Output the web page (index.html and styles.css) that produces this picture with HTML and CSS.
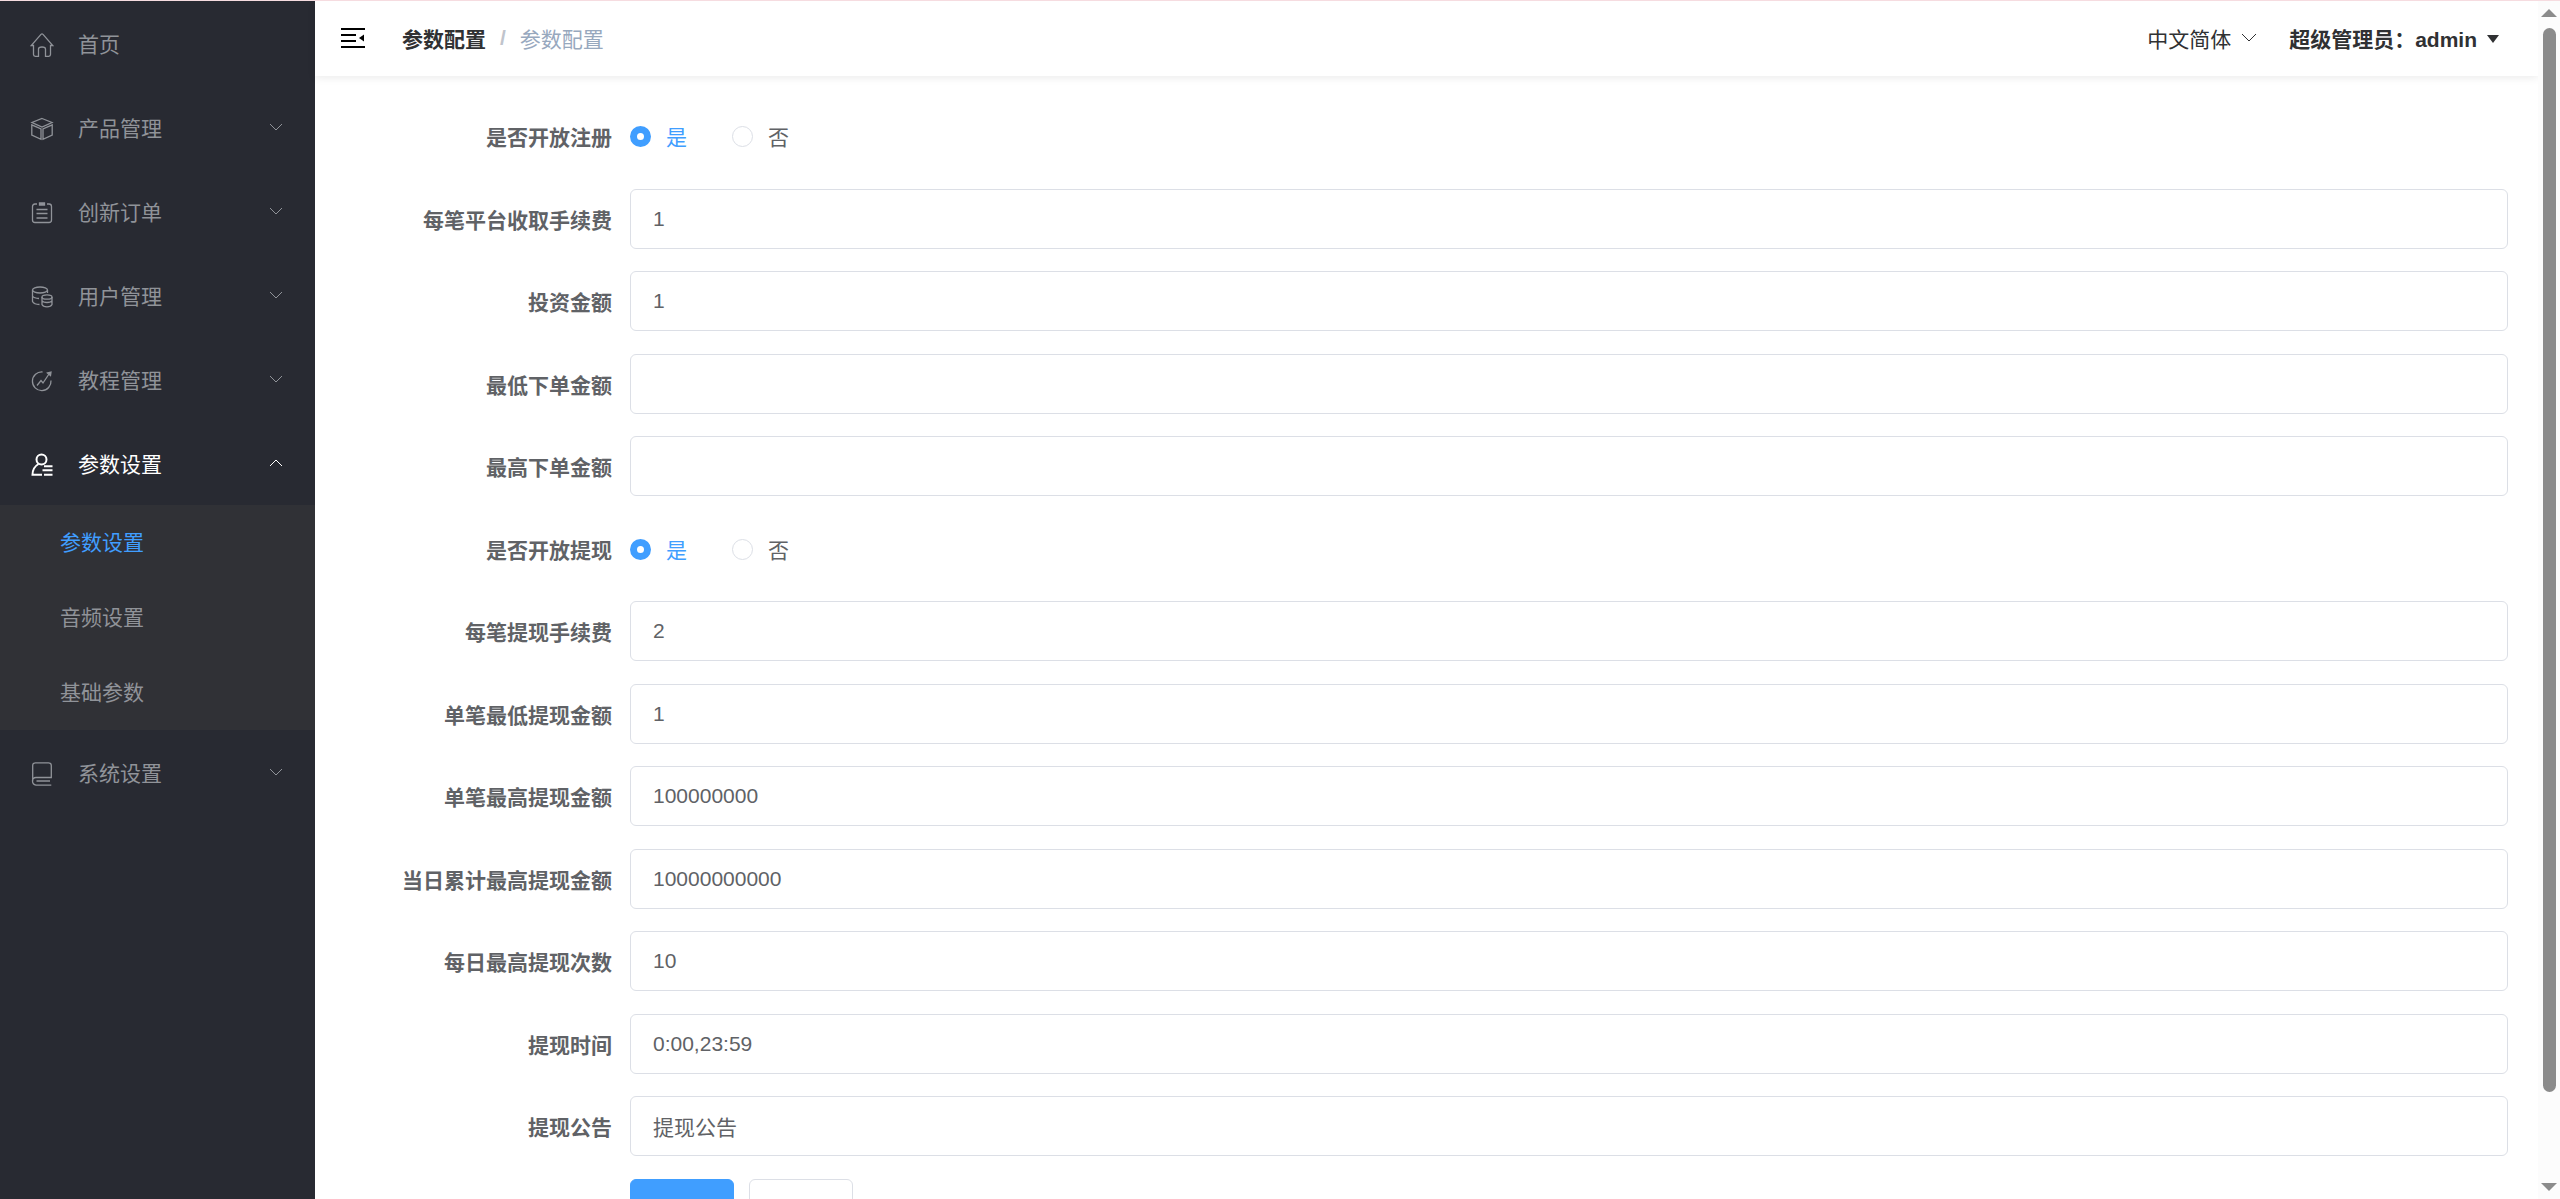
FILE: index.html
```html
<!DOCTYPE html>
<html lang="zh-CN">
  <head>
    <meta charset="UTF-8">
    <title>参数配置</title>
    <link rel="stylesheet" href="styles.css">
  </head>
  <body>
    <!-- Sidebar -->
    <nav class="sidebar">
      <a class="menu-item" href="#">
        <svg class="menu-icon" viewBox="0 0 24 24"><path d="M3.500 12.500H1.200L11 1.400Q12 .4 13 1.400L22.800 12.500H20.500V21.500Q20.500 23.300 18.700 23.300H15.500V16Q15.500 14 12 14Q8.500 14 8.500 16V23.300H5.300Q3.500 23.300 3.500 21.500Z"/></svg>
        <span>首页</span>
      </a>
      <a class="menu-item" href="#">
        <svg class="menu-icon" viewBox="0 0 24 24"><path d="M12 1.500 22 5.500 12 10 2 5.500ZM1.800 7.800 11 12V22.300L1.800 18ZM22.200 7.800 13 12V22.300L22.200 18Z"/></svg>
        <span>产品管理</span>
        <svg class="arrow" viewBox="0 0 14 14"><path d="M1 4l6 6 6-6"/></svg>
      </a>
      <a class="menu-item" href="#">
        <svg class="menu-icon" viewBox="0 0 24 24"><path d="M7 3H5Q2.500 3 2.500 5.500V19Q2.500 21.500 5 21.500H19Q21.500 21.500 21.500 19V5.500Q21.500 3 19 3H17M6.500 8.500H17.500M6.500 12.500H17.500M6.500 17H17.500"/><path class="solid" d="M9.500 2H14.500V4H9.500Z"/></svg>
        <span>创新订单</span>
        <svg class="arrow" viewBox="0 0 14 14"><path d="M1 4l6 6 6-6"/></svg>
      </a>
      <a class="menu-item" href="#">
        <svg class="menu-icon" viewBox="0 0 24 24"><ellipse cx="10" cy="5" rx="7.500" ry="3"/><path d="M2.500 5V16.500Q4 19.300 9.500 19.500M17.500 5V8M2.500 11Q4 13.300 9 13.500"/><ellipse cx="17" cy="12" rx="5" ry="2.200"/><path d="M12 12V19.500Q13 21.800 17 21.800T22 19.500V12M12 15.700Q13 17.500 17 17.500T22 15.700"/></svg>
        <span>用户管理</span>
        <svg class="arrow" viewBox="0 0 14 14"><path d="M1 4l6 6 6-6"/></svg>
      </a>
      <a class="menu-item" href="#">
        <svg class="menu-icon" viewBox="0 0 24 24"><path d="M12.500 3A9.300 9.300 0 1 0 21 11.500M7 16.500 11 11.500 13 14 19 5"/><path class="solid" d="M17.500 4 21 3.200 20.500 6.500Z"/></svg>
        <span>教程管理</span>
        <svg class="arrow" viewBox="0 0 14 14"><path d="M1 4l6 6 6-6"/></svg>
      </a>
      <a class="menu-item open" href="#">
        <svg class="menu-icon" viewBox="0 0 24 24"><circle cx="11.500" cy="6.500" r="5"/><path d="M8.500 11Q2.500 14.500 2.500 21.800H12M14 13.200H22.500M12.500 17.300H22.500M14 21.800H22.500"/></svg>
        <span>参数设置</span>
        <svg class="arrow" viewBox="0 0 14 14"><path d="M1 10l6-6 6 6"/></svg>
      </a>
      <div class="submenu">
        <a class="active" href="#">参数设置</a>
        <a href="#">音频设置</a>
        <a href="#">基础参数</a>
      </div>
      <a class="menu-item" href="#">
        <svg class="menu-icon" viewBox="0 0 24 24"><path d="M2.700 19V3.500Q2.700.8 5.400.8H18.600Q21.300.8 21.300 3.500V15.500H6Q2.500 15.500 2.500 19T6 23.200H21.300M6.500 19H20"/></svg>
        <span>系统设置</span>
        <svg class="arrow" viewBox="0 0 14 14"><path d="M1 4l6 6 6-6"/></svg>
      </a>
    </nav>

    <div class="main">
      <!-- Top bar -->
      <header class="header">
        <button class="fold" type="button" aria-label="折叠菜单">
          <svg viewBox="0 0 24 22"><path d="M0 2H24M0 8H15M0 14H15M0 20H24"/><path class="solid" d="M18 11 23 7.500V14.500Z"/></svg>
        </button>
        <div class="breadcrumb">
          <a href="#">参数配置</a>
          <span class="separator">/</span>
          <span>参数配置</span>
        </div>
        <button class="lang" type="button">
          中文简体
          <svg viewBox="0 0 16 16"><path d="M1 4l7 7 7-7"/></svg>
        </button>
        <button class="user" type="button">
          超级管理员：admin
          <svg viewBox="0 0 12 12"><path d="M0 3H12L6 11Z"/></svg>
        </button>
      </header>

      <!-- Settings form -->
      <form class="form">
        <div class="form-item">
          <span class="label" id="register">是否开放注册</span>
          <div class="radios" role="radiogroup" aria-labelledby="register">
            <label><input type="radio" name="register" checked><span>是</span></label>
            <label><input type="radio" name="register"><span>否</span></label>
          </div>
        </div>
        <div class="form-item">
          <label class="label" for="fee">每笔平台收取手续费</label>
          <input class="text" id="fee" type="text" value="1">
        </div>
        <div class="form-item">
          <label class="label" for="invest">投资金额</label>
          <input class="text" id="invest" type="text" value="1">
        </div>
        <div class="form-item">
          <label class="label" for="order-min">最低下单金额</label>
          <input class="text" id="order-min" type="text">
        </div>
        <div class="form-item">
          <label class="label" for="order-max">最高下单金额</label>
          <input class="text" id="order-max" type="text">
        </div>
        <div class="form-item">
          <span class="label" id="withdraw">是否开放提现</span>
          <div class="radios" role="radiogroup" aria-labelledby="withdraw">
            <label><input type="radio" name="withdraw" checked><span>是</span></label>
            <label><input type="radio" name="withdraw"><span>否</span></label>
          </div>
        </div>
        <div class="form-item">
          <label class="label" for="withdraw-fee">每笔提现手续费</label>
          <input class="text" id="withdraw-fee" type="text" value="2">
        </div>
        <div class="form-item">
          <label class="label" for="withdraw-min">单笔最低提现金额</label>
          <input class="text" id="withdraw-min" type="text" value="1">
        </div>
        <div class="form-item">
          <label class="label" for="withdraw-max">单笔最高提现金额</label>
          <input class="text" id="withdraw-max" type="text" value="100000000">
        </div>
        <div class="form-item">
          <label class="label" for="day-max">当日累计最高提现金额</label>
          <input class="text" id="day-max" type="text" value="10000000000">
        </div>
        <div class="form-item">
          <label class="label" for="day-count">每日最高提现次数</label>
          <input class="text" id="day-count" type="text" value="10">
        </div>
        <div class="form-item">
          <label class="label" for="time">提现时间</label>
          <input class="text" id="time" type="text" value="0:00,23:59">
        </div>
        <div class="form-item">
          <label class="label" for="notice">提现公告</label>
          <input class="text" id="notice" type="text" value="提现公告">
        </div>
        <div class="form-item">
          <span class="label"></span>
          <div class="buttons">
            <button class="btn primary" type="submit" aria-label="提交"></button>
            <button class="btn" type="reset" aria-label="重置"></button>
          </div>
        </div>
      </form>
    </div>

    <!-- Scrollbar -->
    <div class="scrollbar" aria-hidden="true">
      <svg viewBox="0 0 16 8"><path d="M8 0 16 8H0Z"/></svg>
      <div class="track"><div class="thumb"></div></div>
      <svg viewBox="0 0 16 8"><path d="M0 0H16L8 8Z"/></svg>
    </div>
  </body>
</html>
```
FILE: styles.css
```css
* {
  box-sizing: border-box;
}
body {
  display: flex;
  height: 100vh;
  margin: 0;
  overflow: hidden;
  border-top: 1px solid #f6dce0;
  background: #fff;
  color: #606266;
  font-family: "Liberation Sans", "Noto Sans CJK SC", sans-serif;
  font-size: 21px;
}
a {
  color: inherit;
  text-decoration: none;
}
button,
input {
  font: inherit;
  color: inherit;
}
button {
  padding: 0;
  border: 0;
  background: none;
  cursor: pointer;
}
svg {
  fill: none;
  stroke: currentColor;
}
svg .solid {
  fill: currentColor;
}

/* Sidebar */
.sidebar {
  flex: 0 0 315px;
  background: #282a32;
  color: #909399;
}
.menu-item {
  display: flex;
  align-items: center;
  height: 84px;
  padding: 0 32px 0 30px;
}
.menu-item.open {
  color: #fff;
}
.menu-icon {
  width: 24px;
  height: 24px;
  margin-top: 3px;
  margin-right: 24px;
  stroke-width: 1.3;
}
.open .menu-icon {
  stroke-width: 2;
}
.arrow {
  width: 14px;
  height: 14px;
  margin-left: auto;
}
.submenu {
  background: #303136;
}
.submenu a {
  display: block;
  padding-left: 60px;
  line-height: 75px;
}
.submenu .active {
  color: #409eff;
}

/* Top bar */
.main {
  flex: 1;
  min-width: 0;
}
.header {
  display: flex;
  align-items: center;
  height: 75px;
  padding: 0 39px 2px 26px;
  box-shadow: 0 2px 8px rgba(0, 0, 0, 0.08);
  color: #303133;
}
.fold {
  display: flex;
  margin-right: 37px;
  color: #000;
}
.fold svg {
  width: 24px;
  height: 22px;
  stroke-width: 2;
}
.fold .solid {
  stroke: none;
}
.breadcrumb {
  display: flex;
  align-items: center;
  margin-right: auto;
  color: #97a8be;
}
.breadcrumb a {
  color: #303133;
  font-weight: bold;
}
.separator {
  margin: 0 14px;
  color: #c0c4cc;
  font-weight: bold;
}
.lang,
.user {
  display: flex;
  align-items: center;
  gap: 10px;
}
.lang {
  margin-right: 32px;
}
.lang svg {
  width: 16px;
  height: 16px;
}
.user {
  font-weight: bold;
}
.user svg {
  width: 12px;
  height: 12px;
  fill: currentColor;
  stroke: none;
}

/* Form */
.form {
  padding: 30px 30px 0;
}
.form-item {
  display: flex;
  align-items: center;
  height: 60px;
  margin-bottom: 23px;
}
.form-item:nth-child(even) {
  margin-bottom: 22px;
}
.label {
  width: 285px;
  padding-right: 18px;
  font-weight: bold;
  text-align: right;
}
.text {
  flex: 1;
  height: 60px;
  padding: 0 22px;
  border: 1px solid #dcdfe6;
  border-radius: 6px;
  background: #fff;
}
.radios {
  display: flex;
  gap: 45px;
}
.radios label {
  display: flex;
  align-items: center;
  gap: 15px;
}
.radios input {
  appearance: none;
  width: 21px;
  height: 21px;
  margin: 0;
  border: 1px solid #dcdfe6;
  border-radius: 50%;
}
.radios input:checked {
  border: 7px solid #409eff;
}
.radios input:checked + span {
  color: #409eff;
}
.buttons {
  display: flex;
  gap: 15px;
}
.btn {
  width: 104px;
  height: 60px;
  border: 1px solid #dcdfe6;
  border-radius: 6px;
}
.btn.primary {
  border-color: #409eff;
  background: #409eff;
  color: #fff;
}

/* Scrollbar */
.scrollbar {
  display: flex;
  flex: 0 0 22px;
  flex-direction: column;
  align-items: center;
  gap: 11px;
  padding: 8px 0;
  background: #fcfcfc;
  color: #8b8b8b;
}
.scrollbar svg {
  width: 16px;
  height: 8px;
  fill: currentColor;
  stroke: none;
}
.track {
  flex: 1;
  width: 13px;
}
.thumb {
  height: 93%;
  border-radius: 7px;
  background: #8b8b8b;
}
```
